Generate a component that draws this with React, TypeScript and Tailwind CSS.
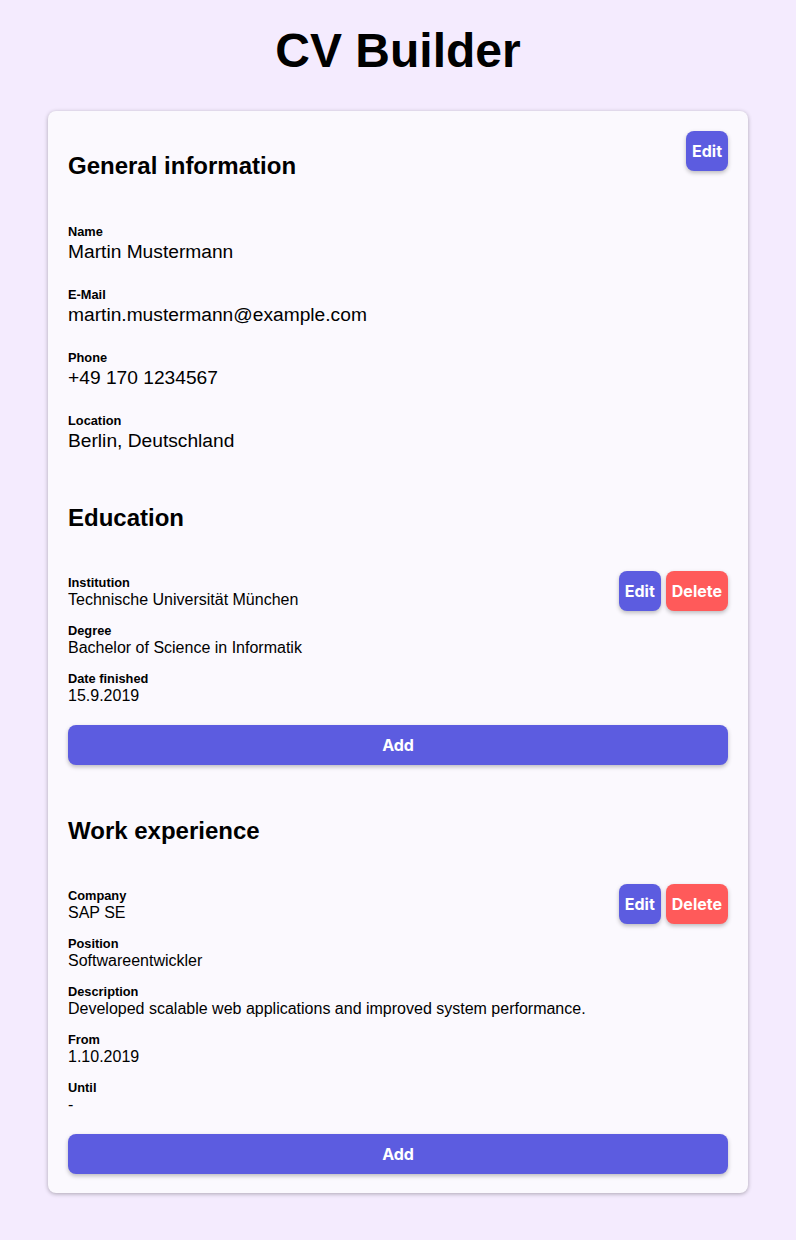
const btn =
  "h-10 rounded-lg px-[6px] text-white text-base font-bold shadow-[0_2px_4px_rgba(0,0,0,0.25)]";
const btnFont = { fontFamily: "Inter, 'Noto Sans', sans-serif" };

type Field = { label: string; value: string };

const general: Field[] = [
  { label: "Name", value: "Martin Mustermann" },
  { label: "E-Mail", value: "martin.mustermann@example.com" },
  { label: "Phone", value: "+49 170 1234567" },
  { label: "Location", value: "Berlin, Deutschland" },
];

const education: Field[] = [
  { label: "Institution", value: "Technische Universität München" },
  { label: "Degree", value: "Bachelor of Science in Informatik" },
  { label: "Date finished", value: "15.9.2019" },
];

const work: Field[] = [
  { label: "Company", value: "SAP SE" },
  { label: "Position", value: "Softwareentwickler" },
  {
    label: "Description",
    value: "Developed scalable web applications and improved system performance.",
  },
  { label: "From", value: "1.10.2019" },
  { label: "Until", value: "-" },
];

const Entry = ({ fields }: { fields: Field[] }) => (
  <div className="mt-[37px] flex items-start justify-between">
    <div className="flex flex-col gap-[14px] pt-[4px]">
      {fields.map((f) => (
        <div key={f.label}>
          <p className="text-[12.8px] font-bold leading-4">{f.label}</p>
          <p className="text-base leading-[18px]">{f.value}</p>
        </div>
      ))}
    </div>
    <div className="flex gap-[5px]">
      <button className={`${btn} bg-[#5c5ce0]`} style={btnFont}>
        Edit
      </button>
      <button className={`${btn} bg-[#ff5a5a]`} style={btnFont}>
        Delete
      </button>
    </div>
  </div>
);

const AddButton = () => (
  <button className={`${btn} mt-[20px] w-full bg-[#5c5ce0]`} style={btnFont}>
    Add
  </button>
);

export default function App() {
  return (
    <div
      className="min-h-screen bg-[#f4ebfe] pt-[27px] pb-[47px] text-black"
      style={{ fontFamily: "'Liberation Sans', Arial, sans-serif" }}
    >
      <h1 className="text-center text-5xl font-bold leading-none">CV Builder</h1>

      <main className="mx-auto mt-[36px] w-[700px] rounded-lg bg-[#fbf9fe] px-5 pt-5 pb-[19px] shadow-[0_1px_4px_rgba(0,0,0,0.3)]">
        {/* Allgemeine Infos */}
        <section>
          <div className="flex items-start justify-between">
            <h2 className="mt-[19px] text-2xl font-bold">General information</h2>
            <button className={`${btn} bg-[#5c5ce0]`} style={btnFont}>
              Edit
            </button>
          </div>
          <div className="mt-[42px] flex flex-col gap-6">
            {general.map((f) => (
              <div key={f.label}>
                <p className="text-[12.8px] font-bold leading-4">{f.label}</p>
                <p className="text-[19.2px] leading-[23px]">{f.value}</p>
              </div>
            ))}
          </div>
        </section>

        <section>
          <h2 className="mt-[50px] text-2xl font-bold">Education</h2>
          <Entry fields={education} />
          <AddButton />
        </section>

        <section>
          <h2 className="mt-[50px] text-2xl font-bold">Work experience</h2>
          <Entry fields={work} />
          <AddButton />
        </section>
      </main>
    </div>
  );
}
